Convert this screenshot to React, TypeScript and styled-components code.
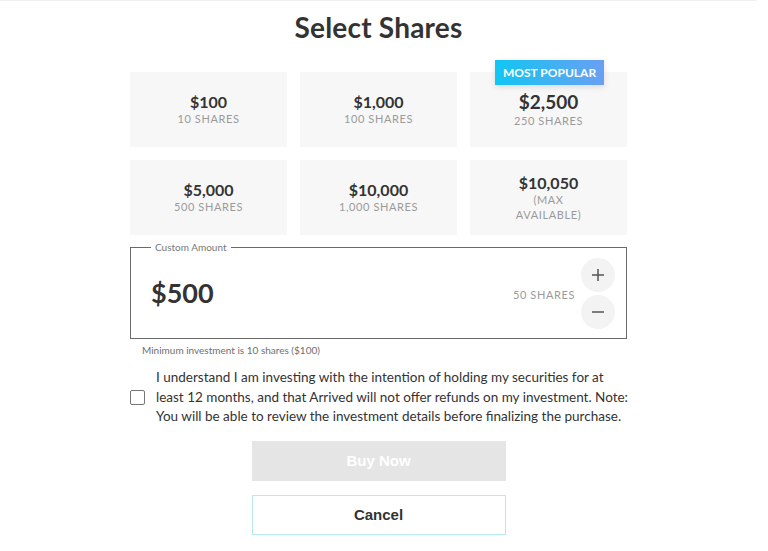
import styled, { createGlobalStyle } from "styled-components";

const GlobalStyle = createGlobalStyle`
  html, body {
    margin: 0;
    padding: 0;
    background: #ffffff;
    font-family: "Lato", "Noto Sans", sans-serif;
    color: #333333;
  }
`;

const options = [
    {price: "$100", shares: "10 SHARES"},
    {price: "$1,000", shares: "100 SHARES"},
    {price: "$2,500", shares: "250 SHARES", popular: true},
    {price: "$5,000", shares: "500 SHARES"},
    {price: "$10,000", shares: "1,000 SHARES"},
    {price: "$10,050", shares: "(MAX AVAILABLE)", narrow: true},
];

const agreeLines = [
    "I understand I am investing with the intention of holding my securities for at",
    "least 12 months, and that Arrived will not offer refunds on my investment. Note:",
    "You will be able to review the investment details before finalizing the purchase.",
];

const Page = styled.div`
  width: 757px;
  min-height: 551px;
  box-sizing: border-box;
  border-top: 1px solid #f0f0f0;
  display: flex;
  flex-direction: column;
  align-items: center;
`;

const Title = styled.h1`
  margin: 9px 0 0;
  font-size: 28px;
  line-height: 34px;
  font-weight: 700;
  color: #333333;
  letter-spacing: 0.2px;
`;

const Grid = styled.div`
  margin-top: 28px;
  width: 497px;
  display: grid;
  grid-template-columns: repeat(3, 1fr);
  gap: 13px;
`;

const Card = styled.div`
  position: relative;
  height: 75px;
  background: #f7f7f7;
  display: flex;
  flex-direction: column;
  align-items: center;
  justify-content: center;
  text-align: center;
`;

const Price = styled.div<{ $big?: boolean }>`
  font-size: ${p => p.$big ? "19px" : "16px"};
  line-height: ${p => p.$big ? "22px" : "18px"};
  font-weight: 700;
  color: #333333;
`;

const Shares = styled.div<{ $narrow?: boolean }>`
  font-size: 11px;
  line-height: 15px;
  letter-spacing: 0.6px;
  color: #9a9a9a;
  max-width: ${p => p.$narrow ? "80px" : "none"};
`;

const Badge = styled.div`
  position: absolute;
  top: -12px;
  left: 25px;
  padding: 0 8px;
  height: 25px;
  line-height: 25px;
  font-size: 12px;
  font-weight: 700;
  color: #ffffff;
  background: linear-gradient(90deg, #10c6f2 0%, #6a9ff2 100%);
  box-shadow: 0 2px 6px rgba(0, 0, 0, .12);
`;

const Fieldset = styled.fieldset`
  margin: 6px 0 0;
  width: 497px;
  box-sizing: border-box;
  border: 1px solid #6a6a6a;
  padding: 7px 11px 0 20px;
  height: 98px;
  display: flex;
  align-items: center;
  min-width: 0;
`;

const Legend = styled.legend`
  margin-left: 0;
  padding: 0 4px;
  font-size: 10px;
  line-height: 12px;
  color: #777777;
`;

const Amount = styled.div`
  font-size: 27px;
  font-weight: 700;
  color: #333333;
  flex: 1;
  margin-top: -4px;
`;

const AmountShares = styled.div`
  font-size: 11px;
  letter-spacing: 0.6px;
  color: #9a9a9a;
  margin-right: 6px;
`;

const Steppers = styled.div`
  display: flex;
  flex-direction: column;
  gap: 3px;
  margin-top: -2px;
`;

const StepButton = styled.button`
  width: 34px;
  height: 34px;
  border-radius: 50%;
  border: none;
  background: #f3f3f3;
  padding: 0;
  display: flex;
  align-items: center;
  justify-content: center;
  cursor: pointer;
`;

const Hint = styled.div`
  width: 497px;
  box-sizing: border-box;
  padding-left: 12px;
  margin-top: 5px;
  font-size: 10px;
  line-height: 12px;
  color: #6f6f6f;
`;

const Agree = styled.label`
  width: 497px;
  margin-top: 12px;
  display: flex;
  align-items: center;
  gap: 11px;
`;

const CheckBox = styled.span`
  flex: none;
  width: 13px;
  height: 13px;
  border: 1px solid #777777;
  border-radius: 2px;
`;

const AgreeText = styled.span`
  font-size: 13.5px;
  line-height: 19.5px;
  color: #333333;
  white-space: nowrap;
`;

const Button = styled.button<{ $outline?: boolean }>`
  width: 254px;
  height: 40px;
  font-family: "Liberation Sans", Arial, sans-serif;
  font-size: 15px;
  font-weight: 700;
  cursor: pointer;
  color: ${p => p.$outline ? "#333333" : "#ffffff"};
  background: ${p => p.$outline ? "#ffffff" : "#e5e5e5"};
  border: ${p => p.$outline ? "1px solid #b6eaee" : "none"};
  margin-top: 14px;
`;

export default function App() {
    return (
        <Page>
            <GlobalStyle/>
            <Title>Select Shares</Title>
            <Grid>
                {options.map(item => (
                    <Card key={item.price}>
                        {item.popular && <Badge>MOST POPULAR</Badge>}
                        <Price $big={item.popular}>{item.price}</Price>
                        <Shares $narrow={item.narrow}>{item.shares}</Shares>
                    </Card>
                ))}
            </Grid>
            <Fieldset>
                <Legend>Custom Amount</Legend>
                <Amount>$500</Amount>
                <AmountShares>50 SHARES</AmountShares>
                <Steppers>
                    <StepButton aria-label="increase">
                        <svg width="14" height="14" viewBox="0 0 14 14">
                            <path d="M7 1v12M1 7h12" stroke="#555" strokeWidth="1.5"/>
                        </svg>
                    </StepButton>
                    <StepButton aria-label="decrease">
                        <svg width="14" height="14" viewBox="0 0 14 14">
                            <path d="M1 7h12" stroke="#555" strokeWidth="1.5"/>
                        </svg>
                    </StepButton>
                </Steppers>
            </Fieldset>
            <Hint>Minimum investment is 10 shares ($100)</Hint>
            <Agree>
                <CheckBox/>
                <AgreeText>
                    {agreeLines.map((line, i) => (
                        <span key={i}>{line}{i < agreeLines.length - 1 && <br/>}</span>
                    ))}
                </AgreeText>
            </Agree>
            <Button disabled>Buy Now</Button>
            <Button $outline>Cancel</Button>
        </Page>
    );
}
